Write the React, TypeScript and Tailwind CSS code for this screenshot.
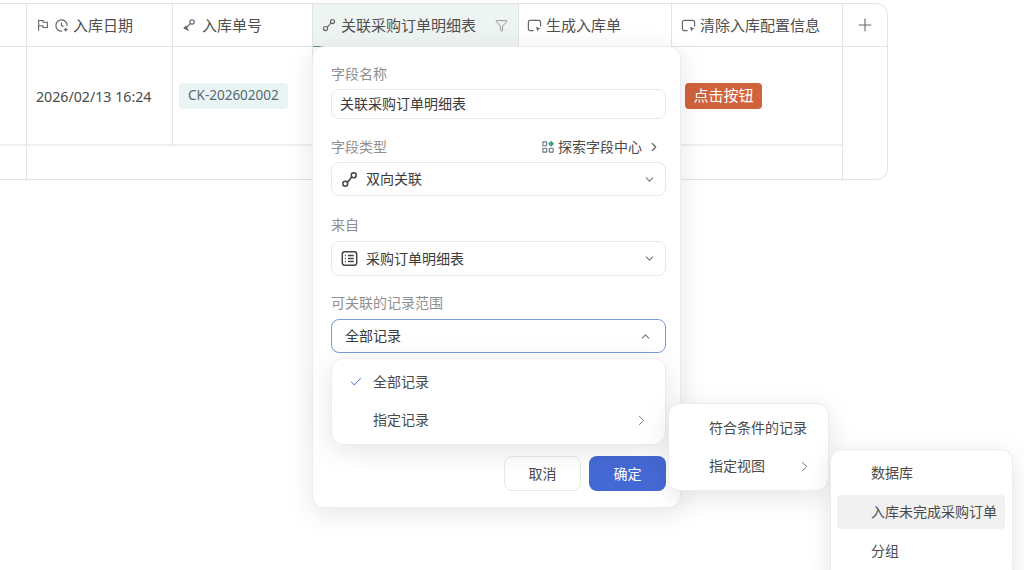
import { Check, ChevronDown, ChevronRight, ChevronUp, Funnel, Plus } from "lucide-react";
import type { ReactNode } from "react";

const fontStack = "font-['Noto_Sans','Noto_Sans_CJK_SC',sans-serif]";
const menuClass = "absolute rounded-xl border border-[#ececec] bg-white shadow-[0_6px_28px_rgba(0,0,0,0.10)]";

function LinkIcon({ className = "" }: { className?: string }) {
  return (
    <svg viewBox="0 0 16 16" fill="none" stroke="currentColor" strokeWidth="1.4" className={className}>
      <circle cx="4" cy="12" r="2.3" />
      <circle cx="12" cy="4" r="2.3" />
      <path d="M5.6 10.4c2.2-.6 2.6-3 4.8-4.8" />
    </svg>
  );
}

function KeyLinkIcon() {
  return (
    <svg viewBox="0 0 16 16" fill="none" stroke="currentColor" strokeWidth="1.4" className="h-[14px] w-[14px] text-[#666]">
      <circle cx="11.5" cy="4.5" r="2.5" />
      <path d="M9.6 6.4 5 11" />
      <path d="M2.5 11.5 4.5 9.5 6.5 13.5z" fill="currentColor" />
    </svg>
  );
}

function ButtonFieldIcon() {
  return (
    <svg viewBox="0 0 16 16" fill="none" className="h-[15px] w-[15px] text-[#666]">
      <path d="M7 13.5H3.5A2 2 0 0 1 1.5 11.5v-7a2 2 0 0 1 2-2h9a2 2 0 0 1 2 2V9" stroke="currentColor" strokeWidth="1.3" />
      <path d="M9.5 9.5 14.5 11l-2.2 1.1-1.1 2.2z" fill="currentColor" />
    </svg>
  );
}

function FlagBoxIcon() {
  return (
    <svg viewBox="0 0 16 16" fill="none" stroke="currentColor" strokeWidth="1.3" className="h-[14px] w-[14px] text-[#666]">
      <path d="M3 14.5V2" />
      <path d="M3 2.8h5v2h5v6H8v-2H3" />
    </svg>
  );
}

function ClockPlusIcon() {
  return (
    <svg viewBox="0 0 16 16" fill="none" stroke="currentColor" strokeWidth="1.3" className="h-[15px] w-[15px] text-[#666]">
      <path d="M14 8.5A6 6 0 1 0 8.5 14" />
      <path d="M8 4.8V8l2 1.2" />
      <path d="M12.5 10.5v4M10.5 12.5h4" />
    </svg>
  );
}

function TableIcon() {
  return (
    <svg viewBox="0 0 16 16" fill="none" stroke="#444" strokeWidth="1.4" className="h-[17px] w-[17px]">
      <rect x="1.2" y="1.7" width="13.6" height="12.6" rx="2.2" />
      <path d="M6.5 5.2h5.5M6.5 8h5.5M6.5 10.8h5.5" />
      <path d="M3.6 5.2h1M3.6 8h1M3.6 10.8h1" />
    </svg>
  );
}

function FieldCenterIcon() {
  return (
    <svg viewBox="0 0 14 14" fill="none" stroke="#6b7280" strokeWidth="1.3" className="h-[12px] w-[12px]">
      <rect x="1" y="1" width="4.5" height="4.5" rx="0.6" />
      <rect x="1" y="8.5" width="4.5" height="4.5" rx="0.6" />
      <rect x="8.5" y="8.5" width="4.5" height="4.5" rx="0.6" />
      <rect x="8.9" y="1.4" width="3.6" height="3.6" stroke="#3f9f8a" fill="#3f9f8a" transform="rotate(45 10.7 3.2)" />
    </svg>
  );
}

function HeaderCell({ children, className = "" }: { children: ReactNode; className?: string }) {
  return (
    <div className={`flex items-center gap-1 border-r border-[#e4e4e4] text-[15px] text-[#4f4f4f] ${className}`}>
      {children}
    </div>
  );
}

function FieldLabel({ children }: { children: ReactNode }) {
  return <div className="text-sm leading-5 text-[#8f8f8f]">{children}</div>;
}

function SelectBox({ icon, height, children }: { icon: ReactNode; height: string; children: ReactNode }) {
  return (
    <div className={`flex items-center rounded-lg border border-[#e8e8e8] pl-[9px] pr-[9px] text-sm text-[#3a3a3a] ${height}`}>
      {icon}
      <span className="ml-[8px] flex-1">{children}</span>
      <ChevronDown className="h-[13px] w-[13px] text-[#777]" />
    </div>
  );
}

export default function App() {
  return (
    <div className={`relative h-[570px] w-[1024px] overflow-hidden bg-white ${fontStack}`}>
      <div className="pt-[3px]">
        <div className="grid h-[177px] w-[888px] grid-cols-[27px_146px_140px_206px_153px_171px_44px] grid-rows-[43px_99px_35px] rounded-r-xl border border-l-0 border-[#e4e4e4]">
          <div className="border-b border-r border-[#e4e4e4]" />
          <HeaderCell className="border-b pl-[9px]">
            <FlagBoxIcon />
            <ClockPlusIcon />
            <span>入库日期</span>
          </HeaderCell>
          <HeaderCell className="border-b pl-[9px]">
            <KeyLinkIcon />
            <span className="ml-[2px]">入库单号</span>
          </HeaderCell>
          <HeaderCell className="border-b border-b-[#5d9482] bg-[#eef4f1] pl-[9px] pr-[10px]">
            <LinkIcon className="h-[14px] w-[14px] text-[#666]" />
            <span className="ml-[1px] flex-1">关联采购订单明细表</span>
            <Funnel className="h-[13px] w-[13px] text-[#777]" strokeWidth={1.4} />
          </HeaderCell>
          <HeaderCell className="border-b pl-[8px]">
            <ButtonFieldIcon />
            <span>生成入库单</span>
          </HeaderCell>
          <HeaderCell className="border-b pl-[9px]">
            <ButtonFieldIcon />
            <span>清除入库配置信息</span>
          </HeaderCell>
          <div className="flex items-center justify-center border-b border-[#e4e4e4]">
            <Plus className="h-[20px] w-[20px] text-[#666]" strokeWidth={1.3} />
          </div>

          <div className="border-b-2 border-r border-[#efefef] border-r-[#e4e4e4]" />
          <div className="flex items-center border-b-2 border-r border-[#efefef] border-r-[#e4e4e4] pl-[9px] pt-[2px] text-[14.2px] text-[#4a4a4a]">
            2026/02/13 16:24
          </div>
          <div className="flex items-center border-b-2 border-r border-[#efefef] border-r-[#e4e4e4] pl-[6px]">
            <span className="flex h-[26px] items-center rounded bg-[#e9f4f5] px-[9px] text-[13.5px] text-[#566a6f]">CK-202602002</span>
          </div>
          <div className="border-b-2 border-[#efefef]" />
          <div className="border-b-2 border-[#efefef]" />
          <div className="flex items-center border-b-2 border-r border-[#efefef] border-r-[#e4e4e4] pl-[13px]">
            <span className="flex h-[26px] items-center rounded bg-[#d0623c] px-[8.5px] text-[15px] text-white">点击按钮</span>
          </div>
          <div className="row-span-2" />

          <div className="border-r border-[#e4e4e4]" />
          <div className="col-span-5 border-r border-[#e4e4e4]" />
        </div>
      </div>

      <div className="absolute left-[312px] top-[46px] h-[462px] w-[369px] rounded-xl border border-[#ececec] bg-white pl-[18px] pr-[14px] pt-[17px] shadow-[0_6px_28px_rgba(0,0,0,0.10)]">
        <FieldLabel>字段名称</FieldLabel>
        <div className="mt-[5px] flex h-[30px] items-center rounded-lg border border-[#e8e8e8] pl-[8px] text-sm text-[#3a3a3a]">关联采购订单明细表</div>

        <div className="mt-[18px] flex items-center justify-between">
          <FieldLabel>字段类型</FieldLabel>
          <div className="flex items-center gap-[4px] pr-[5px] text-sm text-[#4a4a4a]">
            <FieldCenterIcon />
            <span>探索字段中心</span>
            <ChevronRight className="ml-[1px] h-[14px] w-[14px] text-[#666]" />
          </div>
        </div>
        <div className="mt-[5px]">
          <SelectBox height="h-[34px]" icon={<LinkIcon className="h-[17px] w-[17px] text-[#444]" />}>双向关联</SelectBox>
        </div>

        <div className="mt-[19px]">
          <FieldLabel>来自</FieldLabel>
        </div>
        <div className="mt-[6px]">
          <SelectBox height="h-[35px]" icon={<TableIcon />}>采购订单明细表</SelectBox>
        </div>

        <div className="mt-[17px]">
          <FieldLabel>可关联的记录范围</FieldLabel>
        </div>
        <div className="mt-[6px] flex h-[34px] items-center justify-between rounded-lg border border-[#7a98dc] pl-[13px] pr-[13px] text-sm text-[#3a3a3a]">
          <span>全部记录</span>
          <ChevronUp className="h-[13px] w-[13px] text-[#777]" />
        </div>

        <div className="mt-[103px] flex justify-end gap-[8px]">
          <div className="flex h-[35px] w-[77px] items-center justify-center rounded-lg border border-[#e8e8e8] text-sm text-[#4a4a4a]">取消</div>
          <div className="flex h-[35px] w-[77px] items-center justify-center rounded-lg bg-[#4569d4] text-sm text-white">确定</div>
        </div>
      </div>

      <div className={`${menuClass} left-[331px] top-[358px] h-[87px] w-[335px] text-sm text-[#4a4a4a]`}>
        <div className="flex h-[44px] items-center pl-[17px] pt-[2px]">
          <Check className="h-[14px] w-[14px] text-[#4569d4]" strokeWidth={1.7} />
          <span className="ml-[10px]">全部记录</span>
        </div>
        <div className="flex h-[34px] items-center justify-between pl-[41px] pr-[15px]">
          <span>指定记录</span>
          <ChevronRight className="h-[17px] w-[17px] text-[#777]" strokeWidth={1.4} />
        </div>
      </div>

      <div className={`${menuClass} left-[668px] top-[403px] h-[88px] w-[161px] text-sm text-[#4a4a4a]`}>
        <div className="flex h-[44px] items-center pl-[40px] pt-[4px]">符合条件的记录</div>
        <div className="flex h-[36px] items-center justify-between pl-[40px] pr-[15px]">
          <span>指定视图</span>
          <ChevronRight className="h-[17px] w-[17px] text-[#777]" strokeWidth={1.4} />
        </div>
      </div>

      <div className={`${menuClass} left-[830px] top-[449px] h-[140px] w-[183px] pl-[6px] pr-[7px] pt-[6px] text-sm text-[#4a4a4a]`}>
        <div className="flex h-[34px] items-center pl-[34px]">数据库</div>
        <div className="mt-[5px] flex h-[34px] items-center rounded bg-[#f1f1f1] pl-[34px]">入库未完成采购订单</div>
        <div className="mt-[5px] flex h-[34px] items-center pl-[34px]">分组</div>
      </div>
    </div>
  );
}
